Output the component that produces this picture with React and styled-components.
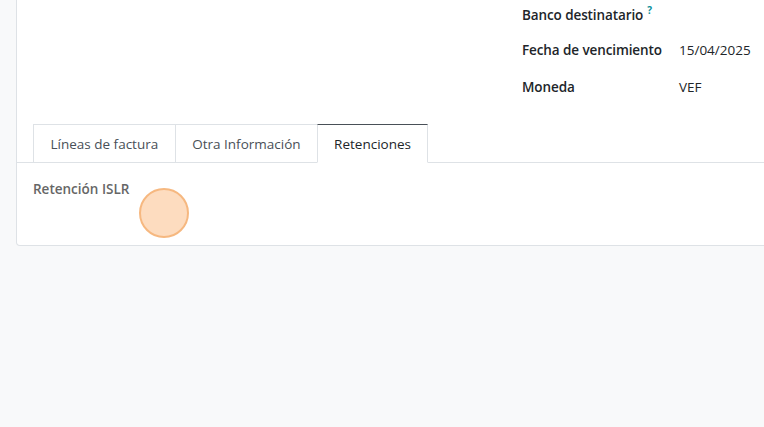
import React from 'react';
import styled, { createGlobalStyle } from 'styled-components';

const GlobalStyle = createGlobalStyle`
  html, body {
    margin: 0;
    padding: 0;
    background: #f8f9fa;
    font-family: "Open Sans", "Noto Sans", sans-serif;
    color: #212529;
    overflow: hidden;
  }
`;

const Page = styled.div`
  height: 427px;
  padding-left: 16px;
  background: #f8f9fa;
  overflow: hidden;
`;

const Sheet = styled.div`
  width: 900px;
  background: #ffffff;
  border: 1px solid #dee2e6;
  border-top: none;
  border-radius: 0 0 4px 4px;
  padding-bottom: 47px;
`;

const Header = styled.div`
  display: grid;
  grid-template-columns: 489px 1fr;
  padding: 0 16px;
`;

const FieldGroup = styled.div`
  display: grid;
  grid-template-columns: 157px 1fr;
  grid-auto-rows: 26px;
  row-gap: 11px;
  align-items: center;
`;

const Label = styled.div`
  font-size: 13.5px;
  font-weight: 600;
  color: #212529;
  white-space: nowrap;
  letter-spacing: -0.1px;
`;

const Help = styled.sup`
  color: #0a8f9a;
  font-size: 10px;
  font-weight: 700;
  margin-left: 4px;
`;

const Value = styled.div`
  font-size: 13.5px;
  color: #212529;
`;

const TabNav = styled.ul`
  display: flex;
  list-style: none;
  margin: 24px 0 0;
  padding: 0 0 0 16px;
  border-bottom: 1px solid #dee2e6;
`;

const Tab = styled.li`
  height: 37px;
  margin-bottom: -1px;
  margin-left: ${(p) => (p.$first ? '0' : '-1px')};
  padding: 0 ${(p) => p.$pad}px;
  display: flex;
  align-items: center;
  font-size: 13.5px;
  color: ${(p) => (p.$active ? '#212529' : '#495057')};
  background: #ffffff;
  border: 1px solid #dee2e6;
  border-top-color: ${(p) => (p.$active ? '#495057' : '#dee2e6')};
  border-bottom-color: ${(p) => (p.$active ? '#ffffff' : '#dee2e6')};
  white-space: nowrap;
  position: relative;
  z-index: ${(p) => (p.$active ? 1 : 0)};
`;

const TabBody = styled.div`
  padding: 17px 16px 0;
  position: relative;
`;

const SectionTitle = styled.div`
  font-size: 13.5px;
  font-weight: 600;
  color: #666666;
`;

const ClickMarker = styled.div`
  position: absolute;
  left: 122px;
  top: 25px;
  width: 46px;
  height: 46px;
  border-radius: 50%;
  background: #fddcbf;
  border: 2px solid #f6b880;
`;

const fields = [
  { label: 'Banco destinatario', help: true, value: '' },
  { label: 'Fecha de vencimiento', value: '15/04/2025' },
  { label: 'Moneda', value: 'VEF' },
];

const tabs = [
  { name: 'Líneas de factura', pad: 16.5 },
  { name: 'Otra Información', pad: 16.5 },
  { name: 'Retenciones', pad: 16 },
];
tabs[2].active = true;

export default function App() {
  return (
    <>
      <GlobalStyle />
      <Page>
        <Sheet>
          <Header>
            <div />
            <FieldGroup>
              {fields.map((f) => (
                <React.Fragment key={f.label}>
                  <Label>
                    {f.label}
                    {f.help && <Help>?</Help>}
                  </Label>
                  <Value>{f.value}</Value>
                </React.Fragment>
              ))}
            </FieldGroup>
          </Header>
          <TabNav>
            {tabs.map((t, i) => (
              <Tab key={t.name} $first={i === 0} $active={t.active} $pad={t.pad}>
                {t.name}
              </Tab>
            ))}
          </TabNav>
          <TabBody>
            <SectionTitle>Retención ISLR</SectionTitle>
            <ClickMarker />
          </TabBody>
        </Sheet>
      </Page>
    </>
  );
}
